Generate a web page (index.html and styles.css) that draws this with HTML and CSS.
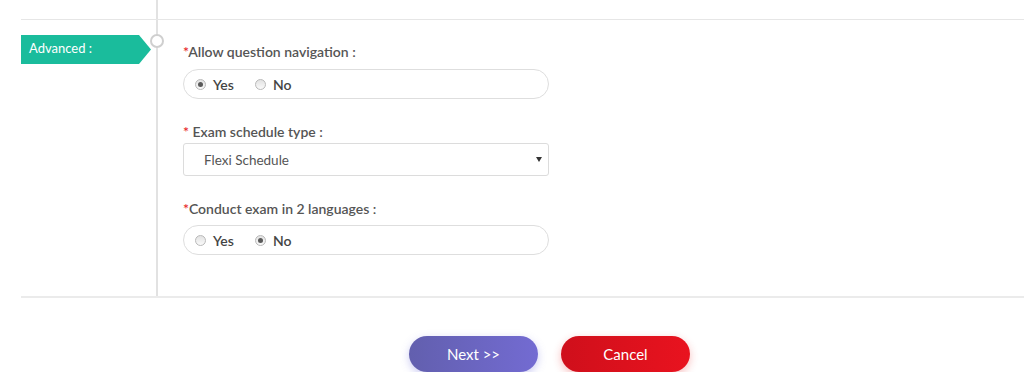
FILE: index.html
```html
<!DOCTYPE html>
<html lang="en">

<head>
  <meta charset="UTF-8">
  <meta name="viewport" content="width=device-width, initial-scale=1.0">
  <title>Exam settings - Advanced</title>
  <link rel="stylesheet" href="styles.css">
</head>

<body>

  <div class="steps">
    <div class="step-head">
      <div class="step-side"></div>
      <div class="step-line"></div>
    </div>

    <div class="step">
      <div class="step-side">
        <div class="step-tag">Advanced :</div>
      </div>
      <div class="step-body">
        <span class="step-dot"></span>

        <div class="field">
          <label class="field-label"><span class="req">*</span>Allow question navigation :</label>
          <div class="radio-box">
            <label class="radio"><input type="radio" name="nav" checked> Yes</label>
            <label class="radio"><input type="radio" name="nav"> No</label>
          </div>
        </div>

        <div class="field field-select">
          <label class="field-label"><span class="req">*</span> Exam schedule type :</label>
          <div class="select-box">
            <select class="select">
              <option>Flexi Schedule</option>
              <option>Fixed Schedule</option>
            </select>
            <span class="select-arrow"></span>
          </div>
        </div>

        <div class="field field-last">
          <label class="field-label"><span class="req">*</span>Conduct exam in 2 languages :</label>
          <div class="radio-box">
            <label class="radio"><input type="radio" name="lang"> Yes</label>
            <label class="radio"><input type="radio" name="lang" checked> No</label>
          </div>
        </div>
      </div>
    </div>
  </div>

  <div class="actions">
    <button class="btn btn-next">Next &gt;&gt;</button>
    <button class="btn btn-cancel">Cancel</button>
  </div>

</body>

</html>
```

FILE: styles.css
```css
body {
  margin: 0;
  font-family: 'Lato', 'Open Sans', sans-serif;
  color: #555;
  background: #fff;
}

.steps {
  margin-left: 21px;
  border-bottom: 2px solid #ebebeb;
}

.step-head,
.step {
  display: flex;
}

.step-head {
  height: 19px;
  border-bottom: 1px solid #e6e6e6;
}

.step-side {
  width: 135px;
  flex-shrink: 0;
}

.step-line,
.step-body {
  flex: 1;
  border-left: 2px solid #e2e2e2;
}

.step-body {
  position: relative;
  padding: 23px 0 41px 25px;
}

.step-tag {
  margin-top: 15px;
  width: 130px;
  height: 29px;
  line-height: 27px;
  padding-left: 8px;
  box-sizing: border-box;
  background-color: #1abc9c;
  color: #fff;
  font-size: 13px;
  clip-path: polygon(0 0, 118px 0, 130px 50%, 118px 100%, 0 100%);
}

.step-dot {
  position: absolute;
  top: 14px;
  left: -8px;
  width: 10px;
  height: 10px;
  border: 2px solid #cfcfcf;
  border-radius: 50%;
  background: #fff;
}

.field {
  margin-bottom: 24px;
}

.field:last-child {
  margin-bottom: 0;
}

.field-label {
  display: block;
  font-size: 14px;
  font-weight: 600;
  line-height: 18px;
  color: #555;
  margin-bottom: 8px;
}

.field-select .field-label {
  margin-bottom: 2px;
}

.field-last .field-label {
  margin-bottom: 7px;
}

.req {
  color: #e8262b;
}

.radio-box {
  width: 366px;
  height: 30px;
  box-sizing: border-box;
  border: 1px solid #dedede;
  border-radius: 15px;
  display: flex;
  align-items: center;
  padding-left: 11px;
  gap: 21px;
}

.radio {
  display: flex;
  align-items: center;
  gap: 7px;
  font-size: 14px;
  font-weight: 600;
  color: #444;
}

.radio input {
  appearance: none;
  -webkit-appearance: none;
  margin: 0;
  width: 11px;
  height: 11px;
  border: 1px solid #b9b9b9;
  border-radius: 50%;
  background: linear-gradient(#e2e2e2, #fafafa);
  position: relative;
}

.radio input:checked::after {
  content: '';
  position: absolute;
  top: 2px;
  left: 2px;
  width: 5px;
  height: 5px;
  border-radius: 50%;
  background: #5a5a5a;
}

.select-box {
  position: relative;
  width: 366px;
}

.select {
  display: block;
  appearance: none;
  -webkit-appearance: none;
  width: 100%;
  height: 33px;
  border: 1px solid #dcdcdc;
  border-radius: 3px;
  background: #fff;
  padding-left: 20px;
  font-family: 'Lato', 'Open Sans', sans-serif;
  font-size: 13.5px;
  color: #555;
}

.select-arrow {
  position: absolute;
  right: 7px;
  top: 14px;
  border-left: 3px solid transparent;
  border-right: 3px solid transparent;
  border-top: 5px solid #333;
}

.actions {
  display: flex;
  justify-content: center;
  gap: 23px;
  padding: 38px 0 0 75px;
}

.btn {
  width: 129px;
  height: 36px;
  border: none;
  border-radius: 18px;
  color: #fff;
  font-family: 'Lato', 'Open Sans', sans-serif;
  font-size: 15px;
  cursor: pointer;
}

.btn-next {
  background: linear-gradient(90deg, #625fae, #736bd2);
  box-shadow: 0 3px 8px rgba(110, 110, 220, 0.35);
}

.btn-cancel {
  background: linear-gradient(90deg, #cf0f1b, #e9131f);
  box-shadow: 0 3px 8px rgba(230, 40, 40, 0.3);
}
```
